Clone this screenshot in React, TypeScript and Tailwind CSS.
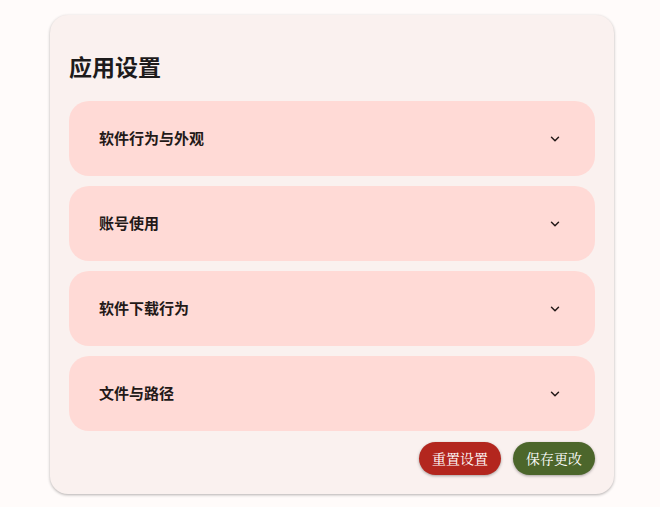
import { ChevronDown } from "lucide-react";

const SECTIONS = ["软件行为与外观", "账号使用", "软件下载行为", "文件与路径"];

export default function App() {
  return (
    <div className="min-h-screen bg-[#fffbfa] pl-[50px] pt-[15px] font-['Noto_Sans_CJK_SC',sans-serif]">
      <div className="w-[564px] rounded-[18px] bg-[#faf1ef] px-[19px] pb-[19px] pt-[37px] shadow-[0_1px_3px_rgba(0,0,0,0.3)]">
        <h1 className="mb-[21px] text-[23px] font-bold leading-[28px] text-[#1d1b1b]">应用设置</h1>
        <div className="flex flex-col gap-[10px]">
          {SECTIONS.map((s) => (
            <button
              key={s}
              className="flex h-[75px] items-center justify-between rounded-[20px] bg-[#ffdad6] pl-[30px] pr-[33px] text-left"
            >
              <span className="text-[15px] font-bold text-[#231918]">{s}</span>
              <ChevronDown size={14} strokeWidth={2.5} className="text-[#231918]" />
            </button>
          ))}
        </div>
        <div className="mt-[11px] flex justify-end gap-[12px]">
          <button className="h-[33px] w-[82px] rounded-full bg-[#b3261e] font-['Noto_Serif_CJK_SC',serif] text-[14px] text-white shadow-[0_1px_3px_rgba(0,0,0,0.35)]">
            重置设置
          </button>
          <button className="h-[33px] w-[82px] rounded-full bg-[#4c662b] font-['Noto_Serif_CJK_SC',serif] text-[14px] text-white shadow-[0_1px_3px_rgba(0,0,0,0.35)]">
            保存更改
          </button>
        </div>
      </div>
    </div>
  );
}
